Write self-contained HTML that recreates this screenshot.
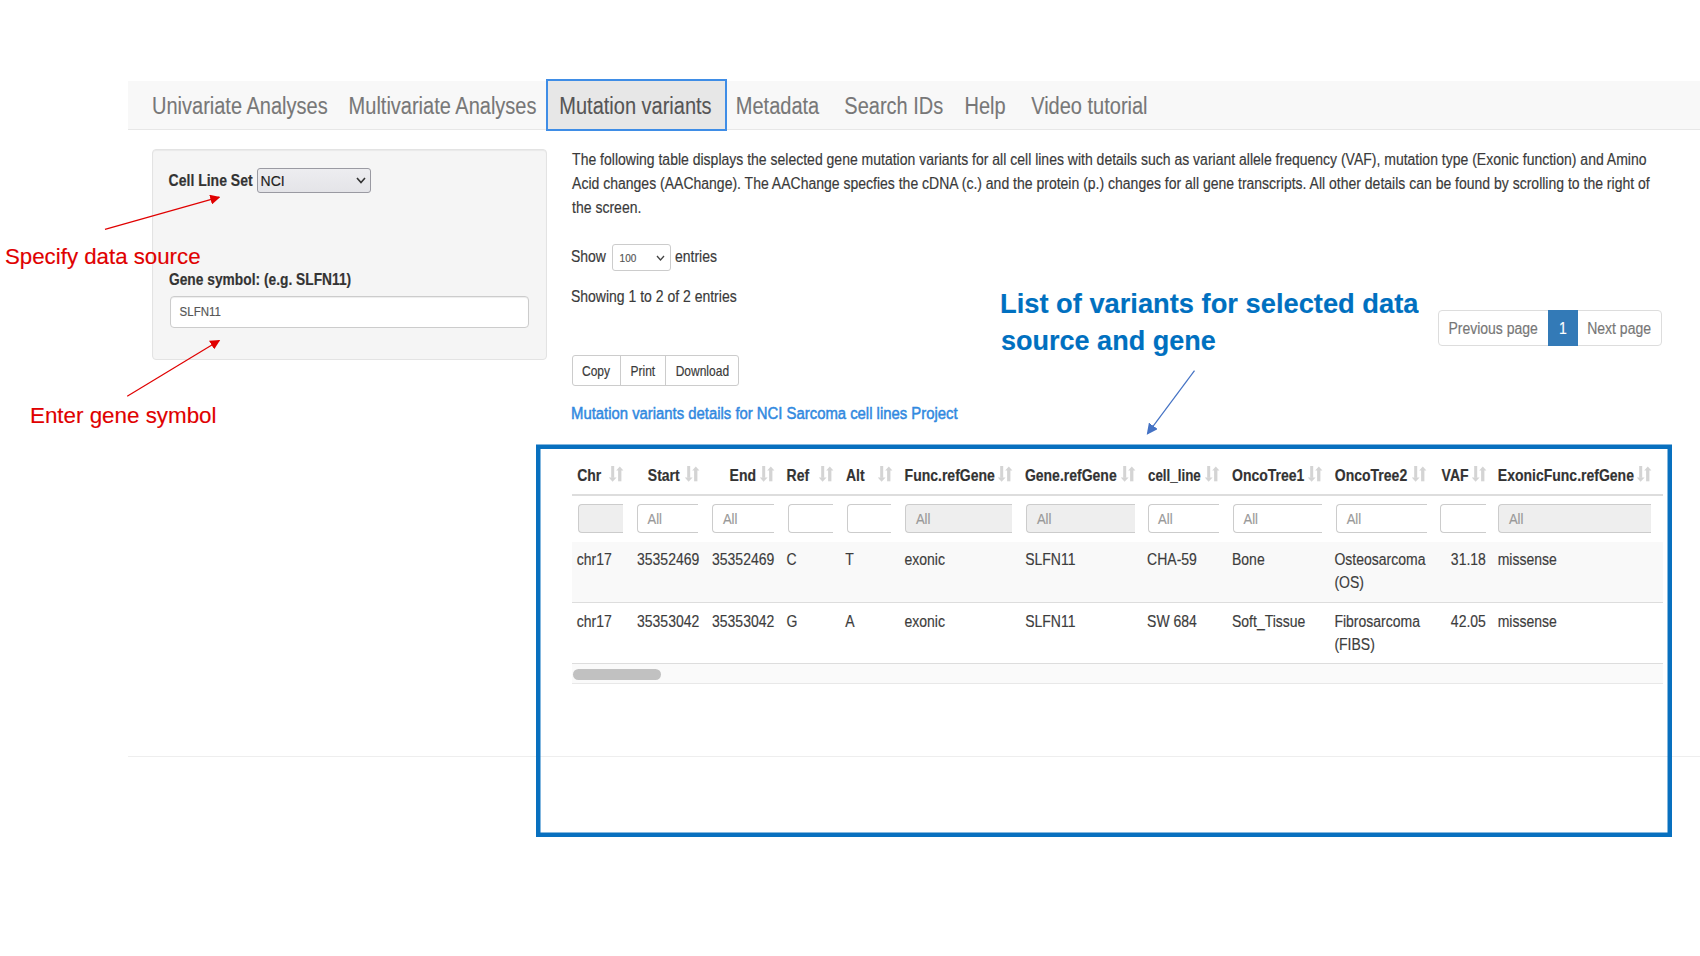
<!DOCTYPE html>
<html><head><meta charset="utf-8"><style>
html,body{margin:0;padding:0;background:#fff;width:1700px;height:956px;overflow:hidden;position:relative}
.t{position:absolute;white-space:nowrap;line-height:1;font-family:"Liberation Sans",sans-serif;-webkit-text-stroke:0.15px currentColor}
.b{position:absolute;display:block}
</style></head><body>
<div class="b" style="left:128px;top:81px;width:1572px;height:49px;background:#f8f8f8;border-bottom:1px solid #e7e7e7;box-sizing:border-box;"></div>
<div class="b" style="left:546px;top:78.6px;width:181px;height:52.900000000000006px;background:#e7e7e7;border:2.75px solid #3f8de6;box-sizing:border-box;"></div>
<div class="t" style="left:152.00px;top:96.67px;font-size:20px;color:#777;font-weight:400;transform:scale(1.0,1.16);transform-origin:0 16.93px;-webkit-text-stroke:0.1px currentColor;">Univariate Analyses</div>
<div class="t" style="left:348.60px;top:96.67px;font-size:20px;color:#777;font-weight:400;transform:scale(1.0,1.16);transform-origin:0 16.93px;-webkit-text-stroke:0.1px currentColor;">Multivariate Analyses</div>
<div class="t" style="left:559.30px;top:96.67px;font-size:20px;color:#555;font-weight:400;transform:scale(1.0,1.16);transform-origin:0 16.93px;-webkit-text-stroke:0.1px currentColor;">Mutation variants</div>
<div class="t" style="left:735.80px;top:96.67px;font-size:20px;color:#777;font-weight:400;transform:scale(1.0,1.16);transform-origin:0 16.93px;-webkit-text-stroke:0.1px currentColor;">Metadata</div>
<div class="t" style="left:844.30px;top:96.67px;font-size:20px;color:#777;font-weight:400;transform:scale(1.0,1.16);transform-origin:0 16.93px;-webkit-text-stroke:0.1px currentColor;">Search IDs</div>
<div class="t" style="left:964.50px;top:96.67px;font-size:20px;color:#777;font-weight:400;transform:scale(1.0,1.16);transform-origin:0 16.93px;-webkit-text-stroke:0.1px currentColor;">Help</div>
<div class="t" style="left:1031.20px;top:96.67px;font-size:20px;color:#777;font-weight:400;transform:scale(1.0,1.16);transform-origin:0 16.93px;-webkit-text-stroke:0.1px currentColor;">Video tutorial</div>
<div class="b" style="left:152px;top:149px;width:395px;height:211px;background:#f5f5f5;border:1px solid #e3e3e3;border-radius:4px;box-sizing:border-box;box-shadow:inset 0 1px 1px rgba(0,0,0,.05);"></div>
<div class="t" style="left:168.60px;top:174.45px;font-size:14px;color:#333;font-weight:700;transform:scale(1.0,1.16);transform-origin:0 11.85px;">Cell Line Set</div>
<div class="b" style="left:257.3px;top:168.4px;width:113.39999999999998px;height:24.19999999999999px;background:linear-gradient(#ededf0,#e4e4e8);border:1px solid #9a9aa2;border-radius:3px;box-sizing:border-box;"></div>
<div class="t" style="left:260.60px;top:174.05px;font-size:14px;color:#222;font-weight:400;transform:scale(1.0,1.04);transform-origin:0 11.85px;">NCI</div>
<svg class="b" style="left:355px;top:176px" width="12" height="9" viewBox="0 0 12 9"><path d="M2 2 L6 6.5 L10 2" fill="none" stroke="#333" stroke-width="1.6"/></svg>
<div class="t" style="left:168.60px;top:273.45px;font-size:14px;color:#333;font-weight:700;transform:scale(0.9836956521739131,1.16);transform-origin:0 11.85px;">Gene symbol: (e.g. SLFN11)</div>
<div class="b" style="left:170px;top:296.3px;width:359.4px;height:31.5px;background:#fff;border:1px solid #ccc;border-radius:4px;box-sizing:border-box;box-shadow:inset 0 1px 1px rgba(0,0,0,.075);"></div>
<div class="t" style="left:179.60px;top:307.27px;font-size:11.5px;color:#555;font-weight:400;transform:scale(1.0,1.16);transform-origin:0 9.73px;">SLFN11</div>
<div class="t" style="left:572.10px;top:153.25px;font-size:14px;color:#3a3a3a;font-weight:400;transform:scale(1.0,1.16);transform-origin:0 11.85px;">The following table displays the selected gene mutation variants for all cell lines with details such as variant allele frequency (VAF), mutation type (Exonic function) and Amino</div>
<div class="t" style="left:572.10px;top:177.05px;font-size:14px;color:#3a3a3a;font-weight:400;transform:scale(1.0,1.16);transform-origin:0 11.85px;">Acid changes (AAChange). The AAChange specfies the cDNA (c.) and the protein (p.) changes for all gene transcripts. All other details can be found by scrolling to the right of</div>
<div class="t" style="left:572.10px;top:200.95px;font-size:14px;color:#3a3a3a;font-weight:400;transform:scale(1.0,1.16);transform-origin:0 11.85px;">the screen.</div>
<div class="t" style="left:570.90px;top:250.15px;font-size:14px;color:#3a3a3a;font-weight:400;transform:scale(1.0,1.16);transform-origin:0 11.85px;">Show</div>
<div class="b" style="left:611.6px;top:244.4px;width:59.799999999999955px;height:26.799999999999983px;background:#fff;border:1px solid #ccc;border-radius:3px;box-sizing:border-box;"></div>
<div class="t" style="left:619.60px;top:253.84px;font-size:10px;color:#555;font-weight:400;transform:scale(1.0,1.16);transform-origin:0 8.46px;">100</div>
<svg class="b" style="left:655px;top:253px" width="11" height="10" viewBox="0 0 11 10"><path d="M2 3 L5.5 7 L9 3" fill="none" stroke="#444" stroke-width="1.3"/></svg>
<div class="t" style="left:675.00px;top:250.15px;font-size:14px;color:#3a3a3a;font-weight:400;transform:scale(1.0,1.16);transform-origin:0 11.85px;">entries</div>
<div class="t" style="left:570.90px;top:289.55px;font-size:14px;color:#3a3a3a;font-weight:400;transform:scale(1.0,1.16);transform-origin:0 11.85px;">Showing 1 to 2 of 2 entries</div>
<div class="b" style="left:1438.4px;top:310.4px;width:224.0px;height:35.200000000000045px;background:#fff;border:1px solid #ddd;border-radius:4px;box-sizing:border-box;"></div>
<div class="b" style="left:1547.7px;top:310.4px;width:30.299999999999955px;height:35.200000000000045px;background:#337ab7;"></div>
<div class="t" style="left:1448.40px;top:321.75px;font-size:14px;color:#777;font-weight:400;transform:scale(1.0,1.16);transform-origin:0 11.85px;">Previous page</div>
<div class="t" style="left:1559.00px;top:321.75px;font-size:14px;color:#fff;font-weight:400;transform:scale(1.0,1.16);transform-origin:0 11.85px;">1</div>
<div class="t" style="left:1587.20px;top:321.75px;font-size:14px;color:#777;font-weight:400;transform:scale(1.0,1.16);transform-origin:0 11.85px;">Next page</div>
<div class="b" style="left:572.4px;top:355px;width:166.30000000000007px;height:31.30000000000001px;background:#fff;border:1px solid #ccc;border-radius:3px;box-sizing:border-box;"></div>
<div class="b" style="left:620px;top:355px;width:1px;height:31.30000000000001px;background:#ccc;"></div>
<div class="b" style="left:665.4px;top:355px;width:1.0px;height:31.30000000000001px;background:#ccc;"></div>
<div class="t" style="left:582.00px;top:365.54px;font-size:12px;color:#3a3a3a;font-weight:400;transform:scale(1.0,1.16);transform-origin:0 10.16px;">Copy</div>
<div class="t" style="left:630.50px;top:365.54px;font-size:12px;color:#3a3a3a;font-weight:400;transform:scale(1.0,1.16);transform-origin:0 10.16px;">Print</div>
<div class="t" style="left:675.70px;top:365.54px;font-size:12px;color:#3a3a3a;font-weight:400;transform:scale(1.0,1.16);transform-origin:0 10.16px;">Download</div>
<div class="t" style="left:571.20px;top:405.90px;font-size:15px;color:#3189e0;font-weight:400;transform:scale(0.990745501285347,1.16);transform-origin:0 12.70px;-webkit-text-stroke:0.45px #3189e0;">Mutation variants details for NCI Sarcoma cell lines Project</div>
<div class="t" style="left:577.20px;top:468.95px;font-size:14px;color:#333;font-weight:700;transform:scale(1.0,1.16);transform-origin:0 11.85px;">Chr</div>
<svg class="b" style="left:609.4px;top:466.3px" width="15" height="16" viewBox="0 0 15 16"><g fill="#d4d4d4" transform="translate(-0.2,0)"><rect x="2.4" y="0" width="3" height="11.8"/><path d="M-0.2 11.4 L7.8 11.4 L3.8 15.8Z"/><rect x="9.3" y="4" width="3.3" height="11.3"/><path d="M7.4 4.4 L14.6 4.4 L11 0.5Z"/></g></svg>
<div class="b" style="left:578.2px;top:503.6px;width:44.799999999999955px;height:29.0px;background:#eee;border:1px solid #ccc;border-right:none;border-radius:4px 0 0 4px;box-sizing:border-box;"></div>
<div class="t" style="left:647.80px;top:468.95px;font-size:14px;color:#333;font-weight:700;transform:scale(1.0,1.16);transform-origin:0 11.85px;">Start</div>
<svg class="b" style="left:684.6px;top:466.3px" width="15" height="16" viewBox="0 0 15 16"><g fill="#d4d4d4" transform="translate(-0.2,0)"><rect x="2.4" y="0" width="3" height="11.8"/><path d="M-0.2 11.4 L7.8 11.4 L3.8 15.8Z"/><rect x="9.3" y="4" width="3.3" height="11.3"/><path d="M7.4 4.4 L14.6 4.4 L11 0.5Z"/></g></svg>
<div class="b" style="left:637px;top:503.6px;width:61.200000000000045px;height:29.0px;background:#fff;border:1px solid #ccc;border-right:none;border-radius:4px 0 0 4px;box-sizing:border-box;"></div>
<div class="t" style="left:647.50px;top:513.10px;font-size:13px;color:#999;font-weight:400;transform:scale(1.0,1.16);transform-origin:0 11.00px;">All</div>
<div class="t" style="left:729.60px;top:468.95px;font-size:14px;color:#333;font-weight:700;transform:scale(1.0,1.16);transform-origin:0 11.85px;">End</div>
<svg class="b" style="left:759.8px;top:466.3px" width="15" height="16" viewBox="0 0 15 16"><g fill="#d4d4d4" transform="translate(-0.2,0)"><rect x="2.4" y="0" width="3" height="11.8"/><path d="M-0.2 11.4 L7.8 11.4 L3.8 15.8Z"/><rect x="9.3" y="4" width="3.3" height="11.3"/><path d="M7.4 4.4 L14.6 4.4 L11 0.5Z"/></g></svg>
<div class="b" style="left:712.4px;top:503.6px;width:61.700000000000045px;height:29.0px;background:#fff;border:1px solid #ccc;border-right:none;border-radius:4px 0 0 4px;box-sizing:border-box;"></div>
<div class="t" style="left:722.90px;top:513.10px;font-size:13px;color:#999;font-weight:400;transform:scale(1.0,1.16);transform-origin:0 11.00px;">All</div>
<div class="t" style="left:786.60px;top:468.95px;font-size:14px;color:#333;font-weight:700;transform:scale(1.0,1.16);transform-origin:0 11.85px;">Ref</div>
<svg class="b" style="left:818.8px;top:466.3px" width="15" height="16" viewBox="0 0 15 16"><g fill="#d4d4d4" transform="translate(-0.2,0)"><rect x="2.4" y="0" width="3" height="11.8"/><path d="M-0.2 11.4 L7.8 11.4 L3.8 15.8Z"/><rect x="9.3" y="4" width="3.3" height="11.3"/><path d="M7.4 4.4 L14.6 4.4 L11 0.5Z"/></g></svg>
<div class="b" style="left:787.6px;top:503.6px;width:45.39999999999998px;height:29.0px;background:#fff;border:1px solid #ccc;border-right:none;border-radius:4px 0 0 4px;box-sizing:border-box;"></div>
<div class="t" style="left:845.90px;top:468.95px;font-size:14px;color:#333;font-weight:700;transform:scale(1.0,1.16);transform-origin:0 11.85px;">Alt</div>
<svg class="b" style="left:877.5px;top:466.3px" width="15" height="16" viewBox="0 0 15 16"><g fill="#d4d4d4" transform="translate(-0.2,0)"><rect x="2.4" y="0" width="3" height="11.8"/><path d="M-0.2 11.4 L7.8 11.4 L3.8 15.8Z"/><rect x="9.3" y="4" width="3.3" height="11.3"/><path d="M7.4 4.4 L14.6 4.4 L11 0.5Z"/></g></svg>
<div class="b" style="left:846.5px;top:503.6px;width:44.700000000000045px;height:29.0px;background:#fff;border:1px solid #ccc;border-right:none;border-radius:4px 0 0 4px;box-sizing:border-box;"></div>
<div class="t" style="left:904.60px;top:468.95px;font-size:14px;color:#333;font-weight:700;transform:scale(1.0,1.16);transform-origin:0 11.85px;">Func.refGene</div>
<svg class="b" style="left:998.0px;top:466.3px" width="15" height="16" viewBox="0 0 15 16"><g fill="#d4d4d4" transform="translate(-0.2,0)"><rect x="2.4" y="0" width="3" height="11.8"/><path d="M-0.2 11.4 L7.8 11.4 L3.8 15.8Z"/><rect x="9.3" y="4" width="3.3" height="11.3"/><path d="M7.4 4.4 L14.6 4.4 L11 0.5Z"/></g></svg>
<div class="b" style="left:905.4px;top:503.6px;width:106.80000000000007px;height:29.0px;background:#eee;border:1px solid #ccc;border-right:none;border-radius:4px 0 0 4px;box-sizing:border-box;"></div>
<div class="t" style="left:915.90px;top:513.10px;font-size:13px;color:#999;font-weight:400;transform:scale(1.0,1.16);transform-origin:0 11.00px;">All</div>
<div class="t" style="left:1024.90px;top:468.95px;font-size:14px;color:#333;font-weight:700;transform:scale(1.0,1.16);transform-origin:0 11.85px;">Gene.refGene</div>
<svg class="b" style="left:1120.8px;top:466.3px" width="15" height="16" viewBox="0 0 15 16"><g fill="#d4d4d4" transform="translate(-0.2,0)"><rect x="2.4" y="0" width="3" height="11.8"/><path d="M-0.2 11.4 L7.8 11.4 L3.8 15.8Z"/><rect x="9.3" y="4" width="3.3" height="11.3"/><path d="M7.4 4.4 L14.6 4.4 L11 0.5Z"/></g></svg>
<div class="b" style="left:1026.4px;top:503.6px;width:108.59999999999991px;height:29.0px;background:#eee;border:1px solid #ccc;border-right:none;border-radius:4px 0 0 4px;box-sizing:border-box;"></div>
<div class="t" style="left:1036.90px;top:513.10px;font-size:13px;color:#999;font-weight:400;transform:scale(1.0,1.16);transform-origin:0 11.00px;">All</div>
<div class="t" style="left:1148.10px;top:468.95px;font-size:14px;color:#333;font-weight:700;transform:scale(0.9545454545454546,1.16);transform-origin:0 11.85px;">cell_line</div>
<svg class="b" style="left:1205.0px;top:466.3px" width="15" height="16" viewBox="0 0 15 16"><g fill="#d4d4d4" transform="translate(-0.2,0)"><rect x="2.4" y="0" width="3" height="11.8"/><path d="M-0.2 11.4 L7.8 11.4 L3.8 15.8Z"/><rect x="9.3" y="4" width="3.3" height="11.3"/><path d="M7.4 4.4 L14.6 4.4 L11 0.5Z"/></g></svg>
<div class="b" style="left:1147.6px;top:503.6px;width:71.40000000000009px;height:29.0px;background:#fff;border:1px solid #ccc;border-right:none;border-radius:4px 0 0 4px;box-sizing:border-box;"></div>
<div class="t" style="left:1158.10px;top:513.10px;font-size:13px;color:#999;font-weight:400;transform:scale(1.0,1.16);transform-origin:0 11.00px;">All</div>
<div class="t" style="left:1232.00px;top:468.95px;font-size:14px;color:#333;font-weight:700;transform:scale(1.0,1.16);transform-origin:0 11.85px;">OncoTree1</div>
<svg class="b" style="left:1308.0px;top:466.3px" width="15" height="16" viewBox="0 0 15 16"><g fill="#d4d4d4" transform="translate(-0.2,0)"><rect x="2.4" y="0" width="3" height="11.8"/><path d="M-0.2 11.4 L7.8 11.4 L3.8 15.8Z"/><rect x="9.3" y="4" width="3.3" height="11.3"/><path d="M7.4 4.4 L14.6 4.4 L11 0.5Z"/></g></svg>
<div class="b" style="left:1233px;top:503.6px;width:89px;height:29.0px;background:#fff;border:1px solid #ccc;border-right:none;border-radius:4px 0 0 4px;box-sizing:border-box;"></div>
<div class="t" style="left:1243.50px;top:513.10px;font-size:13px;color:#999;font-weight:400;transform:scale(1.0,1.16);transform-origin:0 11.00px;">All</div>
<div class="t" style="left:1334.80px;top:468.95px;font-size:14px;color:#333;font-weight:700;transform:scale(1.0,1.16);transform-origin:0 11.85px;">OncoTree2</div>
<svg class="b" style="left:1412.4px;top:466.3px" width="15" height="16" viewBox="0 0 15 16"><g fill="#d4d4d4" transform="translate(-0.2,0)"><rect x="2.4" y="0" width="3" height="11.8"/><path d="M-0.2 11.4 L7.8 11.4 L3.8 15.8Z"/><rect x="9.3" y="4" width="3.3" height="11.3"/><path d="M7.4 4.4 L14.6 4.4 L11 0.5Z"/></g></svg>
<div class="b" style="left:1336.2px;top:503.6px;width:90.59999999999991px;height:29.0px;background:#fff;border:1px solid #ccc;border-right:none;border-radius:4px 0 0 4px;box-sizing:border-box;"></div>
<div class="t" style="left:1346.70px;top:513.10px;font-size:13px;color:#999;font-weight:400;transform:scale(1.0,1.16);transform-origin:0 11.00px;">All</div>
<div class="t" style="left:1441.60px;top:468.95px;font-size:14px;color:#333;font-weight:700;transform:scale(1.0,1.16);transform-origin:0 11.85px;">VAF</div>
<svg class="b" style="left:1471.5px;top:466.3px" width="15" height="16" viewBox="0 0 15 16"><g fill="#d4d4d4" transform="translate(-0.2,0)"><rect x="2.4" y="0" width="3" height="11.8"/><path d="M-0.2 11.4 L7.8 11.4 L3.8 15.8Z"/><rect x="9.3" y="4" width="3.3" height="11.3"/><path d="M7.4 4.4 L14.6 4.4 L11 0.5Z"/></g></svg>
<div class="b" style="left:1439.5px;top:503.6px;width:46.40000000000009px;height:29.0px;background:#fff;border:1px solid #ccc;border-right:none;border-radius:4px 0 0 4px;box-sizing:border-box;"></div>
<div class="t" style="left:1497.80px;top:468.95px;font-size:14px;color:#333;font-weight:700;transform:scale(1.0,1.16);transform-origin:0 11.85px;">ExonicFunc.refGene</div>
<svg class="b" style="left:1636.5px;top:466.3px" width="15" height="16" viewBox="0 0 15 16"><g fill="#d4d4d4" transform="translate(-0.2,0)"><rect x="2.4" y="0" width="3" height="11.8"/><path d="M-0.2 11.4 L7.8 11.4 L3.8 15.8Z"/><rect x="9.3" y="4" width="3.3" height="11.3"/><path d="M7.4 4.4 L14.6 4.4 L11 0.5Z"/></g></svg>
<div class="b" style="left:1498.4px;top:503.6px;width:152.39999999999986px;height:29.0px;background:#eee;border:1px solid #ccc;border-right:none;border-radius:4px 0 0 4px;box-sizing:border-box;"></div>
<div class="t" style="left:1508.90px;top:513.10px;font-size:13px;color:#999;font-weight:400;transform:scale(1.0,1.16);transform-origin:0 11.00px;">All</div>
<div class="b" style="left:572px;top:494px;width:1090.5px;height:2px;background:#ddd;"></div>
<div class="b" style="left:572px;top:541.6px;width:1090.5px;height:60.39999999999998px;background:#f9f9f9;"></div>
<div class="b" style="left:572px;top:602px;width:1090.5px;height:1px;background:#ddd;"></div>
<div class="b" style="left:572px;top:663px;width:1090.5px;height:1px;background:#ddd;"></div>
<div class="b" style="left:572px;top:664px;width:1090.5px;height:19px;background:#fafafa;"></div>
<div class="b" style="left:572px;top:683px;width:1090.5px;height:1px;background:#e8e8e8;"></div>
<div class="b" style="left:573.3px;top:669px;width:88.0px;height:10.700000000000045px;background:#c1c1c1;border-radius:6px;"></div>
<div class="t" style="left:576.80px;top:553.45px;font-size:14px;color:#3d3d3d;font-weight:400;transform:scale(1.0,1.16);transform-origin:0 11.85px;">chr17</div>
<div class="t" style="left:578.30px;width:121px;text-align:right;top:553.45px;font-size:14px;color:#3d3d3d;transform:scaleY(1.16);transform-origin:0 11.85px">35352469</div>
<div class="t" style="left:653.30px;width:121px;text-align:right;top:553.45px;font-size:14px;color:#3d3d3d;transform:scaleY(1.16);transform-origin:0 11.85px">35352469</div>
<div class="t" style="left:786.60px;top:553.45px;font-size:14px;color:#3d3d3d;font-weight:400;transform:scale(1.0,1.16);transform-origin:0 11.85px;">C</div>
<div class="t" style="left:845.20px;top:553.45px;font-size:14px;color:#3d3d3d;font-weight:400;transform:scale(1.0,1.16);transform-origin:0 11.85px;">T</div>
<div class="t" style="left:904.50px;top:553.45px;font-size:14px;color:#3d3d3d;font-weight:400;transform:scale(1.0,1.16);transform-origin:0 11.85px;">exonic</div>
<div class="t" style="left:1025.20px;top:553.45px;font-size:14px;color:#3d3d3d;font-weight:400;transform:scale(1.0,1.16);transform-origin:0 11.85px;">SLFN11</div>
<div class="t" style="left:1147.10px;top:553.45px;font-size:14px;color:#3d3d3d;font-weight:400;transform:scale(1.0,1.16);transform-origin:0 11.85px;">CHA-59</div>
<div class="t" style="left:1232.00px;top:553.45px;font-size:14px;color:#3d3d3d;font-weight:400;transform:scale(1.0,1.16);transform-origin:0 11.85px;">Bone</div>
<div class="t" style="left:1334.40px;top:553.45px;font-size:14px;color:#3d3d3d;font-weight:400;transform:scale(1.0,1.16);transform-origin:0 11.85px;">Osteosarcoma</div>
<div class="t" style="left:1364.90px;width:121px;text-align:right;top:553.45px;font-size:14px;color:#3d3d3d;transform:scaleY(1.16);transform-origin:0 11.85px">31.18</div>
<div class="t" style="left:1497.70px;top:553.45px;font-size:14px;color:#3d3d3d;font-weight:400;transform:scale(1.0,1.16);transform-origin:0 11.85px;">missense</div>
<div class="t" style="left:1334.40px;top:575.85px;font-size:14px;color:#3d3d3d;font-weight:400;transform:scale(1.0,1.16);transform-origin:0 11.85px;">(OS)</div>
<div class="t" style="left:576.80px;top:614.95px;font-size:14px;color:#3d3d3d;font-weight:400;transform:scale(1.0,1.16);transform-origin:0 11.85px;">chr17</div>
<div class="t" style="left:578.30px;width:121px;text-align:right;top:614.95px;font-size:14px;color:#3d3d3d;transform:scaleY(1.16);transform-origin:0 11.85px">35353042</div>
<div class="t" style="left:653.30px;width:121px;text-align:right;top:614.95px;font-size:14px;color:#3d3d3d;transform:scaleY(1.16);transform-origin:0 11.85px">35353042</div>
<div class="t" style="left:786.60px;top:614.95px;font-size:14px;color:#3d3d3d;font-weight:400;transform:scale(1.0,1.16);transform-origin:0 11.85px;">G</div>
<div class="t" style="left:845.20px;top:614.95px;font-size:14px;color:#3d3d3d;font-weight:400;transform:scale(1.0,1.16);transform-origin:0 11.85px;">A</div>
<div class="t" style="left:904.50px;top:614.95px;font-size:14px;color:#3d3d3d;font-weight:400;transform:scale(1.0,1.16);transform-origin:0 11.85px;">exonic</div>
<div class="t" style="left:1025.20px;top:614.95px;font-size:14px;color:#3d3d3d;font-weight:400;transform:scale(1.0,1.16);transform-origin:0 11.85px;">SLFN11</div>
<div class="t" style="left:1147.10px;top:614.95px;font-size:14px;color:#3d3d3d;font-weight:400;transform:scale(1.0,1.16);transform-origin:0 11.85px;">SW 684</div>
<div class="t" style="left:1232.00px;top:614.95px;font-size:14px;color:#3d3d3d;font-weight:400;transform:scale(1.0,1.16);transform-origin:0 11.85px;">Soft_Tissue</div>
<div class="t" style="left:1334.40px;top:614.95px;font-size:14px;color:#3d3d3d;font-weight:400;transform:scale(1.0,1.16);transform-origin:0 11.85px;">Fibrosarcoma</div>
<div class="t" style="left:1364.90px;width:121px;text-align:right;top:614.95px;font-size:14px;color:#3d3d3d;transform:scaleY(1.16);transform-origin:0 11.85px">42.05</div>
<div class="t" style="left:1497.70px;top:614.95px;font-size:14px;color:#3d3d3d;font-weight:400;transform:scale(1.0,1.16);transform-origin:0 11.85px;">missense</div>
<div class="t" style="left:1334.40px;top:637.75px;font-size:14px;color:#3d3d3d;font-weight:400;transform:scale(1.0,1.16);transform-origin:0 11.85px;">(FIBS)</div>
<div class="b" style="left:128px;top:756px;width:1572px;height:1px;background:#eee;"></div>
<div class="t" style="left:4.60px;top:245.58px;font-size:22px;color:#e00000;font-weight:400;transform:scale(1.0119979134063641,1.0);transform-origin:0 18.62px;">Specify data source</div>
<div class="t" style="left:29.60px;top:405.08px;font-size:22px;color:#e00000;font-weight:400;transform:scale(1.0166666666666666,1.0);transform-origin:0 18.62px;">Enter gene symbol</div>
<div class="t" style="left:1000.40px;top:289.70px;font-size:28px;color:#0070c0;font-weight:700;transform:scale(0.9742990654205608,1.0);transform-origin:0 23.70px;">List of variants for selected data</div>
<div class="t" style="left:1001.40px;top:327.40px;font-size:28px;color:#0070c0;font-weight:700;transform:scale(0.965,1.0);transform-origin:0 23.70px;">source and gene</div>
<svg class="b" style="left:0;top:0" width="1700" height="956" viewBox="0 0 1700 956">
<defs>
<marker id="ar" viewBox="0 0 10 10" refX="9" refY="5" markerWidth="10" markerHeight="10" markerUnits="userSpaceOnUse" orient="auto"><path d="M0 0 L10 5 L0 10Z" fill="#e00000"/></marker>
<marker id="ab" viewBox="0 0 10 10" refX="9" refY="5" markerWidth="11" markerHeight="11" markerUnits="userSpaceOnUse" orient="auto"><path d="M0 0 L10 5 L0 10Z" fill="#4472c4"/></marker>
</defs>
<line x1="105" y1="229.4" x2="219.3" y2="197.2" stroke="#e00000" stroke-width="1.2" marker-end="url(#ar)"/>
<line x1="127.2" y1="396.3" x2="219.3" y2="340.4" stroke="#e00000" stroke-width="1.2" marker-end="url(#ar)"/>
<line x1="1194.5" y1="370.7" x2="1147.4" y2="433.8" stroke="#4472c4" stroke-width="1.2" marker-end="url(#ab)"/>
<rect x="538.25" y="446.75" width="1131.5" height="388" fill="none" stroke="#0870bf" stroke-width="4.5"/>
</svg>
</body></html>
